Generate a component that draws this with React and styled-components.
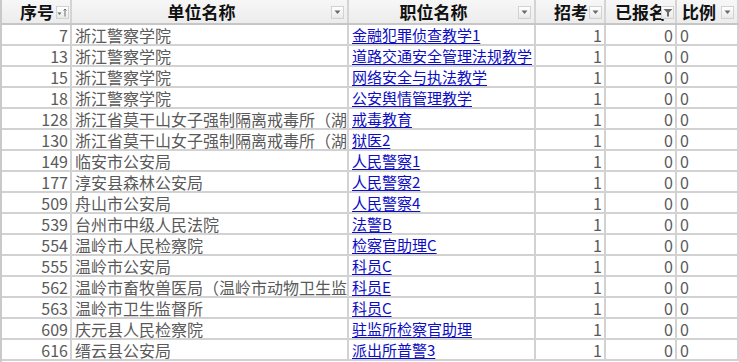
import React from 'react';
import styled, { createGlobalStyle } from 'styled-components';

const GlobalStyle = createGlobalStyle`
  html, body {
    margin: 0;
    padding: 0;
    background: #ffffff;
    overflow: hidden;
  }
`;

const COLS = '70px 277px 187px 70px 71px 1fr';

const Sheet = styled.div`
  width: 739px;
  height: 362px;
  box-sizing: border-box;
  border-left: 2px solid #c9c9c9;
  font-family: "Noto Sans CJK SC", "Noto Sans", sans-serif;
  overflow: hidden;
`;

const HeadRow = styled.div`
  display: grid;
  grid-template-columns: ${COLS};
  height: 25px;
  box-sizing: border-box;
  background: linear-gradient(#f7f7f7, #ececec);
  border-bottom: 2px solid #c6c6c6;
`;

const HeadCell = styled.div`
  position: relative;
  box-sizing: border-box;
  border-right: 2px solid #d4d4d4;
  display: flex;
  align-items: center;
  justify-content: ${(p) => p.align || 'center'};
  padding: ${(p) => p.pad || '0 16px 0 0'};
  font-size: 17px;
  font-weight: 700;
  color: #111;
  white-space: nowrap;
  overflow: hidden;
  line-height: 1;
`;

const FilterButton = styled.span`
  position: absolute;
  right: ${(p) => p.right ?? 2}px;
  top: 6px;
  width: 13px;
  height: 13px;
  box-sizing: border-box;
  border: 1px solid #d2d2d2;
  background: linear-gradient(#ffffff, #e9e9e9);
  display: flex;
  align-items: center;
  justify-content: center;
`;

const DataRow = styled.div`
  display: grid;
  grid-template-columns: ${COLS};
  height: 21px;
  box-sizing: border-box;
  border-bottom: 2px solid #d2d2d2;
`;

const Cell = styled.div`
  box-sizing: border-box;
  border-right: 2px solid #d2d2d2;
  display: flex;
  align-items: center;
  justify-content: ${(p) => (p.right ? 'flex-end' : 'flex-start')};
  padding: ${(p) => (p.right ? '0 2px 0 0' : '0 0 0 3px')};
  font-size: 16px;
  color: #5a5a5a;
  white-space: nowrap;
  overflow: hidden;
  line-height: 1;
`;

const Link = styled.a`
  font-size: 15px;
  color: #0c0cc4;
  text-decoration: underline;
  text-underline-offset: 2px;
`;

const Arrow = () => (
  <svg width="7" height="5" viewBox="0 0 7 5">
    <path d="M0.5 0.5 L6.5 0.5 L3.5 4 Z" fill="#6a6a6a" />
  </svg>
);

const SortArrow = () => (
  <svg width="11" height="9" viewBox="0 0 11 9">
    <path d="M0.5 4.5 L4.5 4.5 L2.5 7 Z" fill="#6a6a6a" />
    <path d="M8 1 L8 8.5 M6.5 2.5 L8 1 L9.5 2.5" stroke="#6a6a6a" strokeWidth="1" fill="none" />
  </svg>
);

const FunnelArrow = () => (
  <svg width="10" height="9" viewBox="0 0 10 9">
    <path d="M0.5 1 L9.5 1 L6 4.5 L6 8.5 L4 8.5 L4 4.5 Z" fill="#6a6a6a" />
  </svg>
);

const rows = [
  [7, '浙江警察学院', '金融犯罪侦查教学1'],
  [13, '浙江警察学院', '道路交通安全管理法规教学'],
  [15, '浙江警察学院', '网络安全与执法教学'],
  [18, '浙江警察学院', '公安舆情管理教学'],
  [128, '浙江省莫干山女子强制隔离戒毒所（湖州市强制隔离戒毒所）', '戒毒教育'],
  [130, '浙江省莫干山女子强制隔离戒毒所（湖州市强制隔离戒毒所）', '狱医2'],
  [149, '临安市公安局', '人民警察1'],
  [177, '淳安县森林公安局', '人民警察2'],
  [509, '舟山市公安局', '人民警察4'],
  [539, '台州市中级人民法院', '法警B'],
  [554, '温岭市人民检察院', '检察官助理C'],
  [555, '温岭市公安局', '科员C'],
  [562, '温岭市畜牧兽医局（温岭市动物卫生监督所）', '科员E'],
  [563, '温岭市卫生监督所', '科员C'],
  [609, '庆元县人民检察院', '驻监所检察官助理'],
  [616, '缙云县公安局', '派出所普警3'],
];

export default function App() {
  return (
    <>
      <GlobalStyle />
      <Sheet>
        <HeadRow>
          <HeadCell align="flex-end" pad="0 16px 0 0">
            序号
            <FilterButton right={1}><SortArrow /></FilterButton>
          </HeadCell>
          <HeadCell>
            单位名称
            <FilterButton right={3}><Arrow /></FilterButton>
          </HeadCell>
          <HeadCell>
            职位名称
            <FilterButton right={3}><Arrow /></FilterButton>
          </HeadCell>
          <HeadCell align="flex-end" pad="0 16px 0 0">
            招考
            <FilterButton right={2}><Arrow /></FilterButton>
          </HeadCell>
          <HeadCell align="flex-start" pad="0 0 0 9px">
            已报名
            <FilterButton right={1}><FunnelArrow /></FilterButton>
          </HeadCell>
          <HeadCell align="flex-start" pad="0 0 0 5px">
            比例
            <FilterButton right={3}><Arrow /></FilterButton>
          </HeadCell>
        </HeadRow>
        {rows.map(([no, unit, job]) => (
          <DataRow key={no}>
            <Cell right>{no}</Cell>
            <Cell>{unit}</Cell>
            <Cell>
              <Link href="#">{job}</Link>
            </Cell>
            <Cell right>1</Cell>
            <Cell right>0</Cell>
            <Cell>0</Cell>
          </DataRow>
        ))}
      </Sheet>
    </>
  );
}
